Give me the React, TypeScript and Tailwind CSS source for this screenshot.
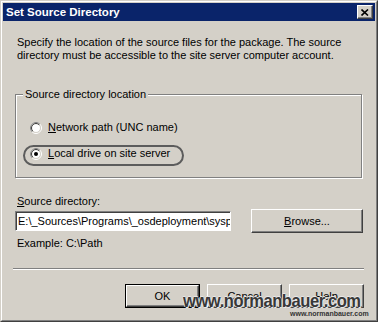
import type { ReactNode } from 'react';

// classic Win2000-style dialog, drawn with borders and inset shadows
const raised =
  'border border-t-white border-l-white border-b-[#404040] border-r-[#404040] shadow-[inset_-1px_-1px_0_#808080]';

function Radio({ checked }: { checked?: boolean }) {
  return (
    <svg width="12" height="12" viewBox="0 0 12 12" className="shrink-0">
      <circle cx="6" cy="6" r="5.5" fill="none" stroke="#ffffff" />
      <path d="M2.1 9.9 A5.5 5.5 0 0 1 9.9 2.1" fill="none" stroke="#808080" />
      <circle cx="6" cy="6" r="4.5" fill="#ffffff" stroke="#d4d0c8" />
      <path d="M2.8 9.2 A4.5 4.5 0 0 1 9.2 2.8" fill="none" stroke="#404040" />
      {checked && <circle cx="6" cy="6" r="2" fill="#000000" />}
    </svg>
  );
}

function Btn({ children, isDefault }: { children: ReactNode; isDefault?: boolean }) {
  if (isDefault) {
    return (
      <div className="h-[24px] w-[75px] border border-black">
        <div className={`flex h-full w-full items-center justify-center ${raised}`}>{children}</div>
      </div>
    );
  }
  return <div className={`flex h-[24px] w-[75px] items-center justify-center ${raised}`}>{children}</div>;
}

export default function App() {
  return (
    <div className="relative h-[322px] w-[378px] overflow-hidden border border-t-[#d4d0c8] border-l-[#d4d0c8] border-b-[#404040] border-r-[#404040] bg-[#d4d0c8] font-['Liberation_Sans',Arial,sans-serif] text-[11px] leading-[13px] text-black">
      <div className="flex h-full flex-col border border-t-white border-l-white border-b-[#808080] border-r-[#808080] p-px">
        {/* title bar */}
        <div className="flex h-[18px] shrink-0 items-center justify-between bg-[#0a246a] pl-[3px] pr-[2px]">
          <span className="text-[11.5px] font-bold text-white">Set Source Directory</span>
          <div className={`flex h-[14px] w-[16px] items-center justify-center bg-[#d4d0c8] ${raised}`}>
            <svg width="8" height="7" viewBox="0 0 8 7">
              <path d="M0.5 0.5 L7 6.5 M7 0.5 L0.5 6.5" stroke="#000" strokeWidth="1.6" />
            </svg>
          </div>
        </div>

        {/* body */}
        <div className="flex flex-1 flex-col pl-[12px] pr-[11px] pt-[15px]">
          <p className="pl-[2px]">
            Specify the location of the source files for the package. The source
            <br />
            directory must be accessible to the site server computer account.
          </p>

          <div className="relative mt-[32px] h-[84px] w-[347px] border border-[#808080] shadow-[inset_1px_1px_0_#fff,1px_1px_0_#fff]">
            <span className="absolute -top-[7px] left-[7px] bg-[#d4d0c8] px-[2px]">Source directory location</span>
            <div className="flex flex-col gap-[13px] pl-[14px] pt-[26px]">
              <div className="flex items-center gap-[6px]">
                <Radio />
                <span>
                  <u>N</u>etwork path (UNC name)
                </span>
              </div>
              <div className="flex items-center gap-[6px]">
                <Radio checked />
                <span>
                  <u>L</u>ocal drive on site server
                </span>
              </div>
            </div>
            {/* annotation ring around the selected option */}
            <div className="absolute left-[7px] top-[50px] h-[21px] w-[161px] rounded-full border-2 border-[#5c5c5c]" />
          </div>

          <div className="mt-[17px] pl-[2px]">
            <u>S</u>ource directory:
          </div>
          <div className="mt-px flex h-[24px] items-center justify-between pr-px">
            <div className="flex h-[20px] w-[216px] items-center overflow-hidden whitespace-nowrap border border-t-[#808080] border-l-[#808080] border-b-white border-r-white bg-white pl-[2px] shadow-[inset_1px_1px_0_#404040]">
              E:\_Sources\Programs\_osdeployment\sysprep
            </div>
            <div className={`flex h-[24px] w-[112px] items-center justify-center ${raised}`}>
              <span>
                <u>B</u>rowse...
              </span>
            </div>
          </div>
          <div className="mt-[4px] pl-[2px]">Example: C:\Path</div>

          <div className="-ml-[2px] mt-[18px] h-[2px] border-t border-t-[#808080] border-b border-b-white" />

          <div className="mt-[14px] flex justify-end gap-[7px]">
            <Btn isDefault>OK</Btn>
            <Btn>Cancel</Btn>
            <Btn>Help</Btn>
          </div>
        </div>
      </div>

      {/* watermark */}
      <div className="absolute left-[182px] top-[290px] origin-left scale-x-[0.87] whitespace-nowrap text-[19px] font-bold leading-[20px] tracking-[-0.5px] text-[#383838] [text-shadow:1px_1px_0_#e8e8e8,-1px_0_0_#e8e8e8,0_-1px_0_#e8e8e8]">
        www.normanbauer.com
      </div>
      <div className="absolute left-[289px] top-[309px] whitespace-nowrap text-[7px] font-bold leading-[8px] text-[#333]">
        www.normanbauer.com
      </div>
    </div>
  );
}
